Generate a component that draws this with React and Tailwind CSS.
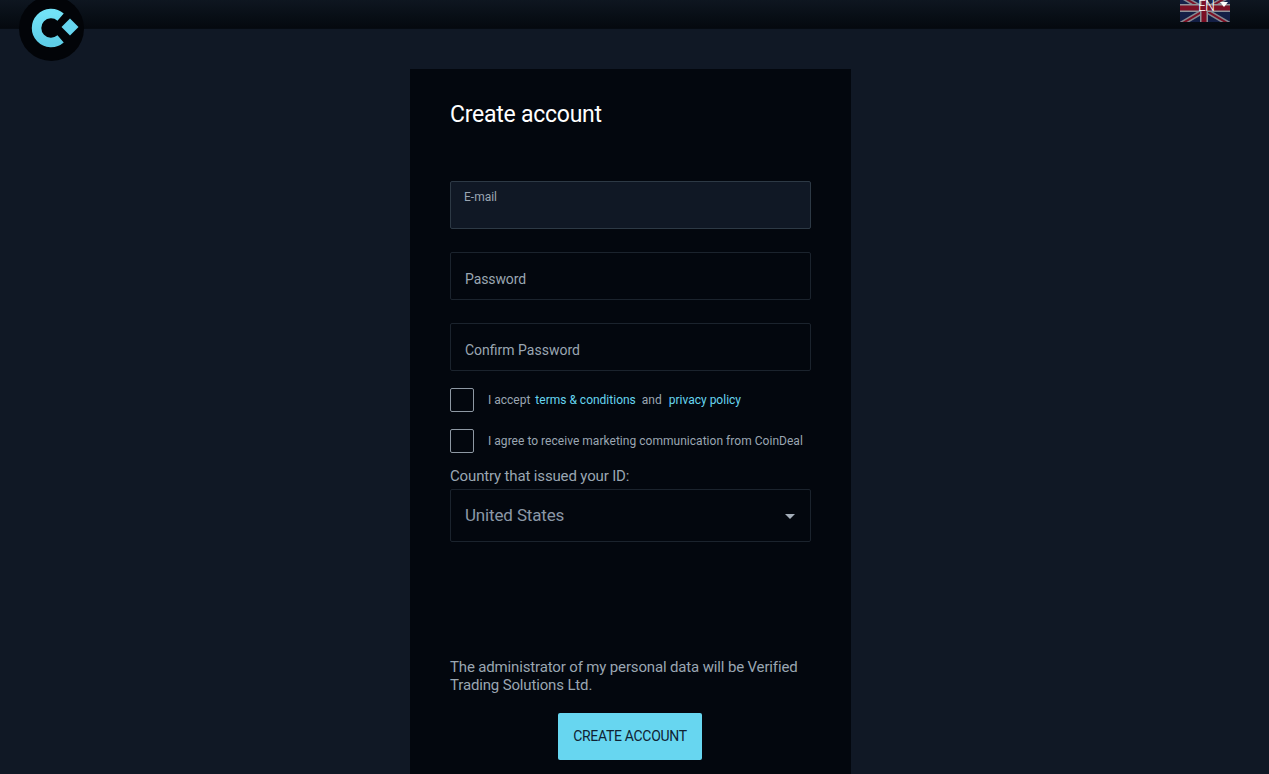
export default function App() {
  return (
    <div className="h-[774px] overflow-hidden bg-[#101825] font-['Roboto',sans-serif]">
      <header className="relative h-[29px] border-b border-[#060b12] bg-gradient-to-b from-[#0e1620] to-[#05090f]">
        <div className="absolute left-[19px] top-[-4px] h-[65px] w-[65px] rounded-full bg-[#020408]">
          <svg width="65" height="65" viewBox="0 0 65 65">
            <defs>
              <linearGradient id="logoGrad" x1="0" y1="0" x2="0" y2="1">
                <stop offset="0" stopColor="#72e2f7" />
                <stop offset="1" stopColor="#5fcfe8" />
              </linearGradient>
            </defs>
            <path d="M41.6 21.1 A14.5 14.5 0 1 0 41.6 42.9" fill="none" stroke="url(#logoGrad)" strokeWidth="9.5" />
            <path d="M51 22.5 L59.5 31 L51 39.5 L42.5 31 Z" fill="#67d6f0" />
          </svg>
        </div>
        <div className="absolute left-[1180px] top-0 h-[22px] w-[50px] overflow-hidden">
          <svg width="50" height="22" viewBox="0 0 50 22" className="absolute left-0 top-0 opacity-60">
            <rect width="50" height="22" fill="#1c2a66" />
            <path d="M-4 -7 L54 27 M-4 27 L54 -7" stroke="#d8d8e0" strokeWidth="5" />
            <path d="M-4 -7 L54 27 M-4 27 L54 -7" stroke="#c8102e" strokeWidth="2" />
            <path d="M24 -2 V22 M0 8 H50" stroke="#e8e8ee" strokeWidth="8" />
            <path d="M24 -2 V22 M0 8 H50" stroke="#c8102e" strokeWidth="5" />
          </svg>
          <span className="absolute left-[18px] top-[-3px] text-[14px] font-light leading-[18px] tracking-[-1px] text-white">EN</span>
          <span className="absolute left-[40px] top-[2px] h-0 w-0 border-x-[4px] border-t-[5px] border-x-transparent border-t-white" />
        </div>
      </header>

      <div className="pr-[8px]">
        <main className="mx-auto mt-[40px] h-[705px] w-[441px] bg-[#03070e] px-[40px] pt-[33px]">
          <h1 className="text-[23px] font-normal leading-[26px] tracking-[-0.25px] text-white">Create account</h1>

          <div className="mt-[53px] h-[48px] rounded-[2px] border border-[#2d3945] bg-[#101825] px-[13px] pt-[8px] text-[12px] leading-[14px] text-[#9aa6b2]">
            E-mail
          </div>
          <div className="mt-[23px] flex h-[48px] items-center rounded-[2px] border border-[#1b232d] px-[14px] pt-[6px] text-[14px] tracking-[-0.1px] text-[#9aa6b2]">
            Password
          </div>
          <div className="mt-[23px] flex h-[48px] items-center rounded-[2px] border border-[#1b232d] px-[14px] pt-[6px] text-[14px] text-[#9aa6b2]">
            Confirm Password
          </div>

          <div className="mt-[17px] flex h-[24px] items-center text-[12px] text-[#9aa6b2]">
            <span className="mr-[14px] h-[24px] w-[24px] rounded-[2px] border border-[#8e98a3]" />
            <span>I accept</span>
            <a className="ml-[5px] text-[#67d6f0]">terms &amp; conditions</a>
            <span className="ml-[6px]">and</span>
            <a className="ml-[7px] text-[#67d6f0]">privacy policy</a>
          </div>
          <div className="mt-[17px] flex h-[24px] items-center text-[12px] text-[#9aa6b2]">
            <span className="mr-[14px] h-[24px] w-[24px] rounded-[2px] border border-[#8e98a3]" />
            <span className="tracking-[0.03px]">I agree to receive marketing communication from CoinDeal</span>
          </div>

          <div className="mt-[13px] text-[15px] leading-[20px] tracking-[-0.15px] text-[#9aa6b2]">Country that issued your ID:</div>
          <div className="mt-[3px] flex h-[53px] items-center justify-between rounded-[2px] border border-[#1b232d] pl-[14px] pr-[15px] pt-[1px] text-[17px] tracking-[-0.15px] text-[#8b97a6]">
            <span>United States</span>
            <span className="h-0 w-0 border-x-[5px] border-t-[5px] border-x-transparent border-t-[#a4adb8]" />
          </div>

          <p className="mt-[116px] text-[15px] leading-[18px] tracking-[-0.15px] text-[#9aa6b2]">
            The administrator of my personal data will be Verified Trading Solutions Ltd.
          </p>
          <div className="mt-[19px] flex justify-center pr-[1px]">
            <button className="h-[47px] w-[144px] rounded-[2px] bg-[#67d6f0] text-[14px] font-normal tracking-[-0.3px] text-[#0f2233]">
              CREATE ACCOUNT
            </button>
          </div>
        </main>
      </div>
    </div>
  );
}
